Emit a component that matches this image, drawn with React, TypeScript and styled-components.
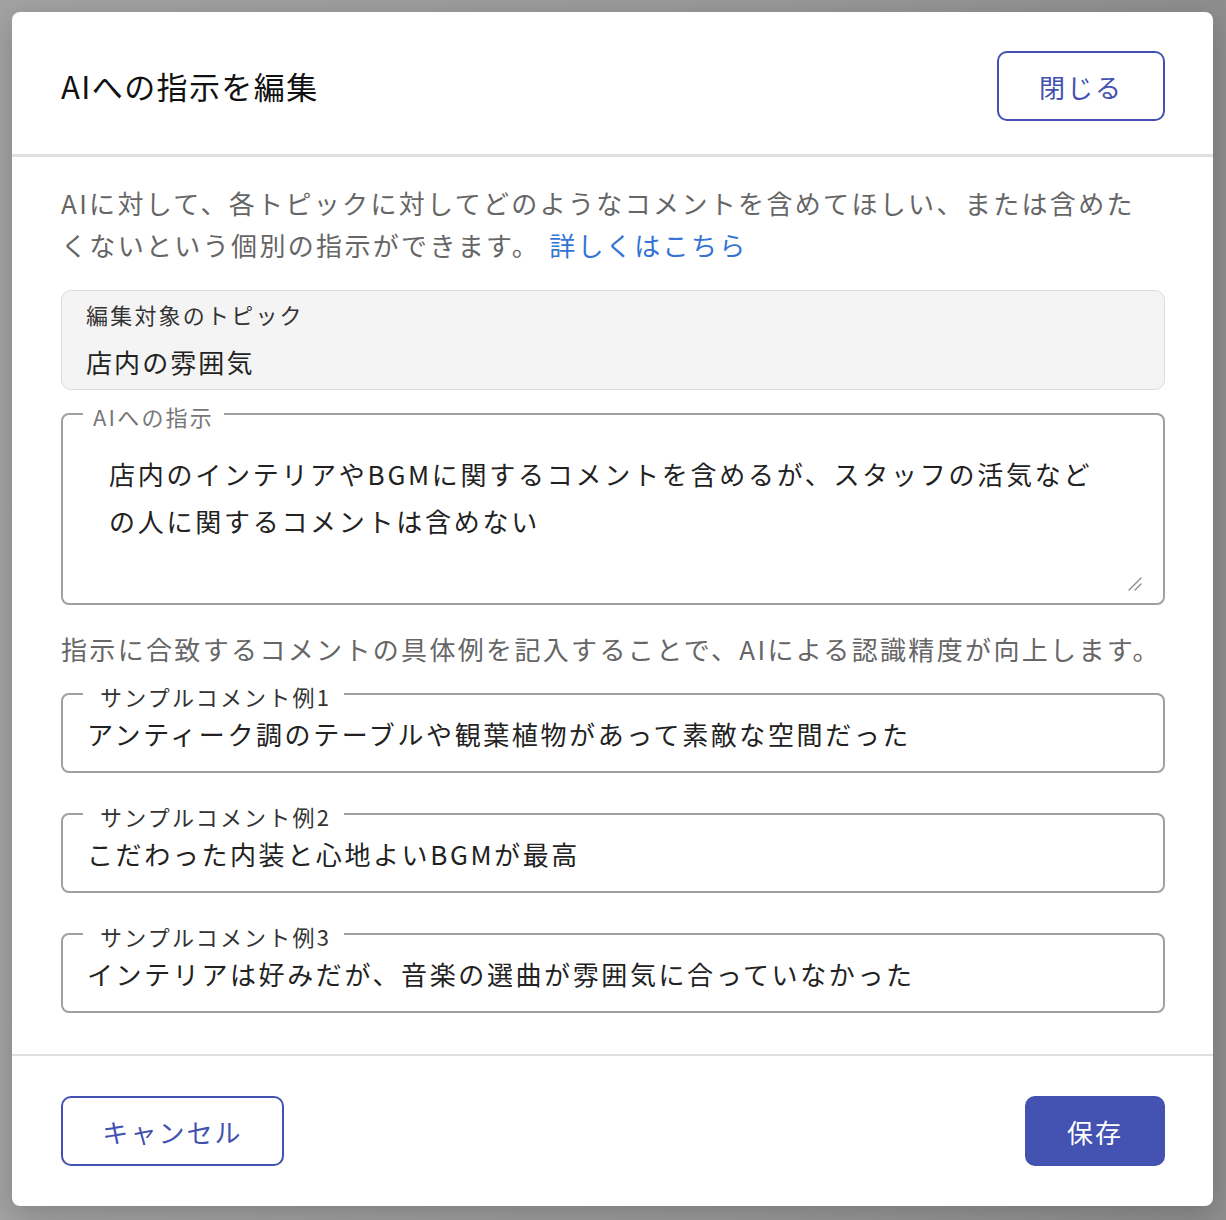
import React from "react";
import styled, { createGlobalStyle } from "styled-components";

const GlobalStyle = createGlobalStyle`
  html, body {
    margin: 0;
    padding: 0;
  }
  body {
    font-family: "Noto Sans CJK JP", "Noto Sans", sans-serif;
    background: #979797;
  }
  * { box-sizing: border-box; }
`;

const Backdrop = styled.div`
  min-height: 1220px;
  padding: 12px 13px 15px 12px;
  background: linear-gradient(90deg, #a3a3a3 0%, #9a9a9a 60%, #8e8e8e 100%);
`;

const Dialog = styled.div`
  width: 1201px;
  background: #ffffff;
  border-radius: 8px;
  display: flex;
  flex-direction: column;
  box-shadow: 0 8px 30px rgba(0, 0, 0, 0.2);
`;

const Header = styled.header`
  display: flex;
  align-items: center;
  justify-content: space-between;
  padding: 39px 48px 33px 49px;
  border-bottom: 3px solid #e0e0e0;
`;

const Title = styled.h2`
  margin: 0;
  font-size: 31px;
  font-weight: 400;
  letter-spacing: 1.4px;
  color: #111111;
  line-height: 40px;
`;

const Button = styled.button<{ $variant: "outline" | "solid"; $width: number }>`
  width: ${(p) => p.$width}px;
  height: 70px;
  border-radius: 10px;
  font-family: inherit;
  font-size: 26px;
  letter-spacing: 0.08em;
  cursor: pointer;
  display: flex;
  align-items: center;
  justify-content: center;
  border: 2px solid #4351b0;
  background: ${(p) => (p.$variant === "solid" ? "#4452b1" : "#ffffff")};
  color: ${(p) => (p.$variant === "solid" ? "#ffffff" : "#4351b0")};
`;

const Body = styled.div`
  display: flex;
  flex-direction: column;
  padding: 25px 48px 41px 49px;
`;

const Paragraph = styled.p<{ $top?: number; $maxWidth?: number }>`
  margin: ${(p) => p.$top ?? 0}px 0 0;
  max-width: ${(p) => (p.$maxWidth ? `${p.$maxWidth}px` : "none")};
  font-size: 26px;
  line-height: 42px;
  letter-spacing: 0.09em;
  color: #666666;
`;

const Link = styled.a`
  margin-left: 9px;
  color: #3474d4;
  text-decoration: none;
`;

const TopicBox = styled.div`
  margin-top: 24px;
  display: flex;
  flex-direction: column;
  padding: 7px 24px 7px;
  background: #f4f4f4;
  border: 1px solid #dddddd;
  border-radius: 10px;
`;

const TopicLabel = styled.span`
  font-size: 22px;
  line-height: 32px;
  letter-spacing: 0.1em;
  color: #333333;
`;

const TopicValue = styled.span`
  margin-top: 12px;
  font-size: 26px;
  line-height: 40px;
  letter-spacing: 0.08em;
  color: #222222;
`;

const Field = styled.fieldset<{ $top: number; $padBottom: number }>`
  margin: ${(p) => p.$top}px 0 0;
  padding: 0 20px ${(p) => p.$padBottom}px 24px;
  border: 2px solid #a0a0a0;
  border-radius: 8px;
  min-width: 0;
`;

const Legend = styled.legend<{ $tone: "muted" | "dark" }>`
  margin-left: -4px;
  padding: 4px ${(p) => (p.$tone === "muted" ? 10 : 13)}px 0 ${(p) => (p.$tone === "muted" ? 10 : 17)}px;
  font-size: 22px;
  line-height: 26px;
  letter-spacing: 0.1em;
  color: ${(p) => (p.$tone === "muted" ? "#777777" : "#333333")};
`;

const TextAreaWrap = styled.div`
  position: relative;
`;

const TextArea = styled.textarea`
  display: block;
  width: 100%;
  height: 162px;
  margin: 0;
  padding: 21px 40px 0 22px;
  border: none;
  outline: none;
  resize: none;
  font-family: inherit;
  font-size: 26px;
  line-height: 47px;
  letter-spacing: 0.105em;
  color: #222222;
  background: transparent;
  overflow: hidden;
`;

const ResizeGrip = styled.svg`
  position: absolute;
  right: 0;
  bottom: 0;
  width: 16px;
  height: 16px;
  pointer-events: none;
`;

const Input = styled.input`
  display: block;
  width: 100%;
  height: 36px;
  margin: 7px 0 0;
  padding: 0;
  border: none;
  outline: none;
  font-family: inherit;
  font-size: 26px;
  line-height: 36px;
  letter-spacing: 0.1em;
  color: #222222;
  background: transparent;
`;

const Footer = styled.footer`
  display: flex;
  align-items: center;
  justify-content: space-between;
  padding: 40px 48px 40px 49px;
  border-top: 2px solid #e0e0e0;
`;

const samples = [
  { label: "サンプルコメント例1", value: "アンティーク調のテーブルや観葉植物があって素敵な空間だった", top: 9 },
  { label: "サンプルコメント例2", value: "こだわった内装と心地よいBGMが最高", top: 26 },
  { label: "サンプルコメント例3", value: "インテリアは好みだが、音楽の選曲が雰囲気に合っていなかった", top: 26 },
];

export default function App() {
  return (
    <>
      <GlobalStyle />
      <Backdrop>
        <Dialog role="dialog" aria-label="AIへの指示を編集">
          <Header>
            <Title>AIへの指示を編集</Title>
            <Button $variant="outline" $width={168}>閉じる</Button>
          </Header>
          <Body>
            <Paragraph $maxWidth={1090}>
              AIに対して、各トピックに対してどのようなコメントを含めてほしい、または含めたくないという個別の指示ができます。
              <Link href="#">詳しくはこちら</Link>
            </Paragraph>
            <TopicBox>
              <TopicLabel>編集対象のトピック</TopicLabel>
              <TopicValue>店内の雰囲気</TopicValue>
            </TopicBox>
            <Field $top={9} $padBottom={12}>
              <Legend $tone="muted">AIへの指示</Legend>
              <TextAreaWrap>
                <TextArea
                  defaultValue="店内のインテリアやBGMに関するコメントを含めるが、スタッフの活気などの人に関するコメントは含めない"
                />
                <ResizeGrip viewBox="0 0 16 16" aria-hidden="true">
                  <path d="M2 15 L14 3 M8 15 L14 9" stroke="#8a8a8a" strokeWidth="1.3" strokeLinecap="round" fill="none" />
                </ResizeGrip>
              </TextAreaWrap>
            </Field>
            <Paragraph $top={23}>
              指示に合致するコメントの具体例を記入することで、AIによる認識精度が向上します。
            </Paragraph>
            {samples.map((s) => (
              <Field key={s.label} $top={s.top} $padBottom={19}>
                <Legend $tone="dark">{s.label}</Legend>
                <Input defaultValue={s.value} />
              </Field>
            ))}
          </Body>
          <Footer>
            <Button $variant="outline" $width={223}>キャンセル</Button>
            <Button $variant="solid" $width={140}>保存</Button>
          </Footer>
        </Dialog>
      </Backdrop>
    </>
  );
}
